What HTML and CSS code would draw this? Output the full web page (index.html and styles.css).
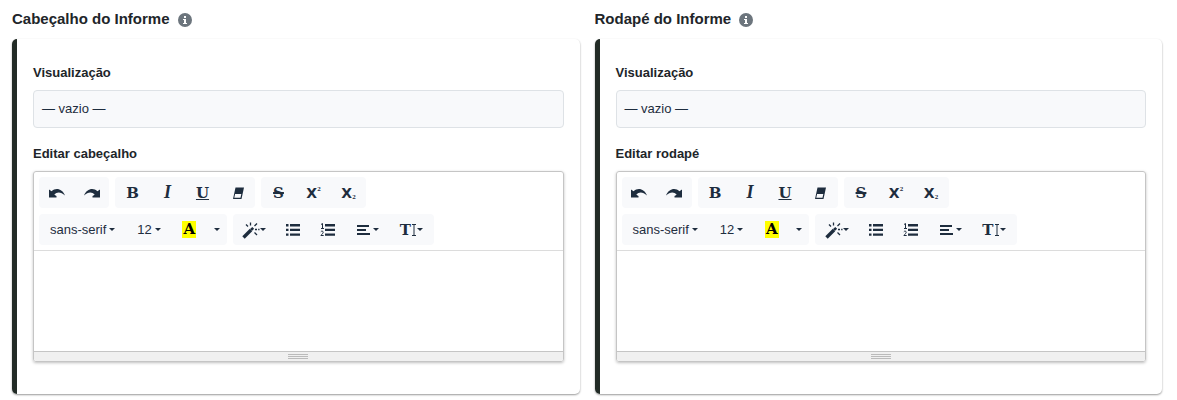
FILE: index.html
```
<!DOCTYPE html>
<html lang="pt-BR">
<head>
    <meta charset="UTF-8">
    <meta name="viewport" content="width=device-width, initial-scale=1.0">
    <title>Cabeçalho e Rodapé do Informe</title>
    <link rel="stylesheet" href="styles.css">
</head>
<body>
    <!-- Toolbar icons -->
    <svg class="sprite" aria-hidden="true">
        <symbol id="i-undo" viewBox="0 0 18 18"><path d="M1 5.500v8h7.500V12L6.300 10.700C9 7.500 13 7.800 17 11.500 14.500 4.500 7.500 3 3.600 7.300z"/></symbol>
        <symbol id="i-eraser" viewBox="0 0 18 18"><path fill-rule="evenodd" d="M6.500 3.500H15L12.500 15H4zM6.100 10l-.8 3.800h6.200l.8-3.800z"/></symbol>
        <symbol id="i-magic" viewBox="0 0 18 18"><path d="M1.500 16.500L9 9" stroke="currentColor" stroke-width="3.400"/><path d="M9 9l2.200-2.200" stroke="currentColor" stroke-width="2.600"/><path d="M8.500 1.500v3M4 3.500l2 2M15 2.500l-2.500 2.500M13 8.500h2M16.200 8.500h1.300M12.500 11.500l2.500 2.500" stroke="currentColor" stroke-width="1.300"/></symbol>
        <symbol id="i-ul" viewBox="0 0 18 18"><path d="M2 3h2.500v2.400H2zM2 7.700h2.500v2.400H2zM2 12.400h2.500v2.400H2zM6 3h10v2.400H6zM6 7.700h10v2.400H6zM6 12.400h10v2.400H6z"/></symbol>
        <symbol id="i-ol" viewBox="0 0 18 18"><path d="M6 3h10v2.400H6zM6 7.700h10v2.400H6zM6 12.400h10v2.400H6z"/><path d="M2 3.500l1.500-1v5M2 7.500h3M1.800 10.800c.5-1 2.700-.9 2.400.6-.2 1-1.500 1.900-2.300 3.100h2.800" fill="none" stroke="currentColor"/></symbol>
        <symbol id="i-align" viewBox="0 0 18 18"><path d="M2 4h12v2H2zM2 8h9v2H2zM2 12h13v2H2z"/></symbol>
        <symbol id="i-height" viewBox="0 0 6 14"><path d="M3 2v10M1 1.500h4M1 12.500h4" stroke="currentColor"/></symbol>
        <symbol id="i-info" viewBox="0 0 14 14"><circle cx="7" cy="7" r="7" fill="#6c757d"/><path fill="#fff" d="M6 3h2v2H6zM5 6h3v4h1v1H5v-1h1V7H5z"/></symbol>
    </svg>

    <main class="columns">
        <section>
            <h2>Cabeçalho do Informe <svg class="info" role="img" aria-label="Informação"><use href="#i-info"/></svg></h2>
            <div class="card">
                <h3>Visualização</h3>
                <div class="preview">— vazio —</div>
                <h3 id="label-header">Editar cabeçalho</h3>
                <div class="editor">
                    <div class="toolbar">
                        <div class="group">
                            <button type="button" aria-label="Desfazer"><svg class="icon"><use href="#i-undo"/></svg></button>
                            <button type="button" aria-label="Refazer"><svg class="icon flip"><use href="#i-undo"/></svg></button>
                        </div>
                        <div class="group">
                            <button type="button" class="serif">B</button>
                            <button type="button" class="serif italic">I</button>
                            <button type="button" class="serif underline">U</button>
                            <button type="button" aria-label="Remover formatação"><svg class="icon"><use href="#i-eraser"/></svg></button>
                        </div>
                        <div class="group">
                            <button type="button" class="serif strike">S</button>
                            <button type="button" class="script">X<sup>2</sup></button>
                            <button type="button" class="script">X<sub>2</sub></button>
                        </div>
                        <div class="group">
                            <button type="button" class="drop">sans-serif<i class="caret"></i></button>
                            <button type="button" class="drop">12<i class="caret"></i></button>
                            <button type="button" class="serif"><span class="mark">A</span></button>
                            <button type="button" class="more" aria-label="Mais cores"><i class="caret"></i></button>
                        </div>
                        <div class="group">
                            <button type="button" class="drop wide" aria-label="Estilo"><svg class="icon"><use href="#i-magic"/></svg><i class="caret"></i></button>
                            <button type="button" aria-label="Lista"><svg class="icon"><use href="#i-ul"/></svg></button>
                            <button type="button" aria-label="Lista numerada"><svg class="icon"><use href="#i-ol"/></svg></button>
                            <button type="button" class="drop wide" aria-label="Alinhamento"><svg class="icon"><use href="#i-align"/></svg><i class="caret"></i></button>
                            <button type="button" class="drop serif" aria-label="Altura da linha">T<svg class="height"><use href="#i-height"/></svg><i class="caret"></i></button>
                        </div>
                    </div>
                    <textarea aria-labelledby="label-header"></textarea>
                    <div class="resizebar"><i></i><i></i><i></i></div>
                </div>
            </div>
        </section>

        <section>
            <h2>Rodapé do Informe <svg class="info" role="img" aria-label="Informação"><use href="#i-info"/></svg></h2>
            <div class="card">
                <h3>Visualização</h3>
                <div class="preview">— vazio —</div>
                <h3 id="label-footer">Editar rodapé</h3>
                <div class="editor">
                    <div class="toolbar">
                        <div class="group">
                            <button type="button" aria-label="Desfazer"><svg class="icon"><use href="#i-undo"/></svg></button>
                            <button type="button" aria-label="Refazer"><svg class="icon flip"><use href="#i-undo"/></svg></button>
                        </div>
                        <div class="group">
                            <button type="button" class="serif">B</button>
                            <button type="button" class="serif italic">I</button>
                            <button type="button" class="serif underline">U</button>
                            <button type="button" aria-label="Remover formatação"><svg class="icon"><use href="#i-eraser"/></svg></button>
                        </div>
                        <div class="group">
                            <button type="button" class="serif strike">S</button>
                            <button type="button" class="script">X<sup>2</sup></button>
                            <button type="button" class="script">X<sub>2</sub></button>
                        </div>
                        <div class="group">
                            <button type="button" class="drop">sans-serif<i class="caret"></i></button>
                            <button type="button" class="drop">12<i class="caret"></i></button>
                            <button type="button" class="serif"><span class="mark">A</span></button>
                            <button type="button" class="more" aria-label="Mais cores"><i class="caret"></i></button>
                        </div>
                        <div class="group">
                            <button type="button" class="drop wide" aria-label="Estilo"><svg class="icon"><use href="#i-magic"/></svg><i class="caret"></i></button>
                            <button type="button" aria-label="Lista"><svg class="icon"><use href="#i-ul"/></svg></button>
                            <button type="button" aria-label="Lista numerada"><svg class="icon"><use href="#i-ol"/></svg></button>
                            <button type="button" class="drop wide" aria-label="Alinhamento"><svg class="icon"><use href="#i-align"/></svg><i class="caret"></i></button>
                            <button type="button" class="drop serif" aria-label="Altura da linha">T<svg class="height"><use href="#i-height"/></svg><i class="caret"></i></button>
                        </div>
                    </div>
                    <textarea aria-labelledby="label-footer"></textarea>
                    <div class="resizebar"><i></i><i></i><i></i></div>
                </div>
            </div>
        </section>
    </main>
</body>
</html>
```
FILE: styles.css
```
* {
    box-sizing: border-box;
}
body {
    margin: 0;
    font-family: "Liberation Sans", Arial, sans-serif;
    font-size: 13px;
    line-height: 20px;
    color: #212529;
    background: #fff;
}
.sprite {
    display: none;
}
.columns {
    display: grid;
    grid-template-columns: 1fr 1fr;
    gap: 15px;
    padding: 9px 15px 5px 12px;
}
h2 {
    display: flex;
    align-items: center;
    gap: 8px;
    margin: 0 0 10px;
    font-size: 15px;
    line-height: 20px;
}
.info {
    width: 14px;
    height: 14px;
    margin-top: 2px;
}
.card {
    padding: 24px 16px 32px;
    border-left: 5px solid #222b26;
    border-radius: 5px;
    box-shadow: 0 1px 2px rgba(0,0,0,0.4);
}
h3 {
    margin: 0 0 7px;
    font-size: 13px;
    line-height: 20px;
}
.preview {
    margin-bottom: 16px;
    padding: 8px;
    border: 1px solid #dee2e6;
    border-radius: 4px;
    background: #f8f9fb;
    color: #1e2d3e;
}
.editor {
    border: 1px solid #c5c5c5;
    border-radius: 3px;
    box-shadow: 0 1px 3px rgba(0,0,0,0.25);
    overflow: hidden;
}
.toolbar {
    display: flex;
    flex-wrap: wrap;
    gap: 6px;
    max-width: 410px;
    padding: 5px;
}
.group {
    display: flex;
    height: 31px;
    border-radius: 4px;
    background: #f8f9fb;
}
button {
    display: flex;
    align-items: center;
    justify-content: center;
    width: 35px;
    padding: 0;
    border: 0;
    background: transparent;
    color: #1e2d3e;
    font: 13px "Liberation Sans", Arial, sans-serif;
    cursor: pointer;
}
.icon {
    width: 18px;
    height: 18px;
    fill: currentColor;
}
.flip {
    transform: scaleX(-1);
}
.serif {
    font: bold 15px "DejaVu Serif", "Times New Roman", serif;
}
.italic {
    font: italic bold 18px "Liberation Serif", "Times New Roman", serif;
}
.underline {
    text-decoration: underline 1px;
}
.strike {
    text-decoration: line-through 2px;
}
.script {
    font: bold 14px "DejaVu Sans", sans-serif;
}
sup, sub {
    font: bold 7px "Liberation Serif", serif;
}
sup {
    align-self: flex-start;
    margin-top: 8px;
}
sub {
    align-self: flex-end;
    margin-bottom: 7px;
}
.drop {
    width: auto;
    padding: 0 11px;
}
.wide {
    width: 43px;
    padding: 0;
}
.more {
    width: 20px;
}
.caret {
    margin-left: 3px;
    border: 3px solid transparent;
    border-top-color: currentColor;
    border-bottom: 0;
}
.wide .caret,
.more .caret,
.height + .caret {
    margin: 0;
}
.mark {
    width: 14px;
    line-height: 17px;
    background: #ff0;
    color: #000;
}
.height {
    width: 6px;
    height: 14px;
}
textarea {
    display: block;
    width: 100%;
    height: 101px;
    padding: 10px;
    border: 0;
    border-top: 1px solid #dcdcdc;
    outline: 0;
    resize: none;
    font: inherit;
}
.resizebar {
    display: flex;
    flex-direction: column;
    align-items: center;
    gap: 1px;
    height: 10px;
    padding-top: 2px;
    border-top: 1px solid #c5c5c5;
    background: #f0f0f0;
}
.resizebar i {
    width: 20px;
    height: 1px;
    background: #bbb;
}
```
